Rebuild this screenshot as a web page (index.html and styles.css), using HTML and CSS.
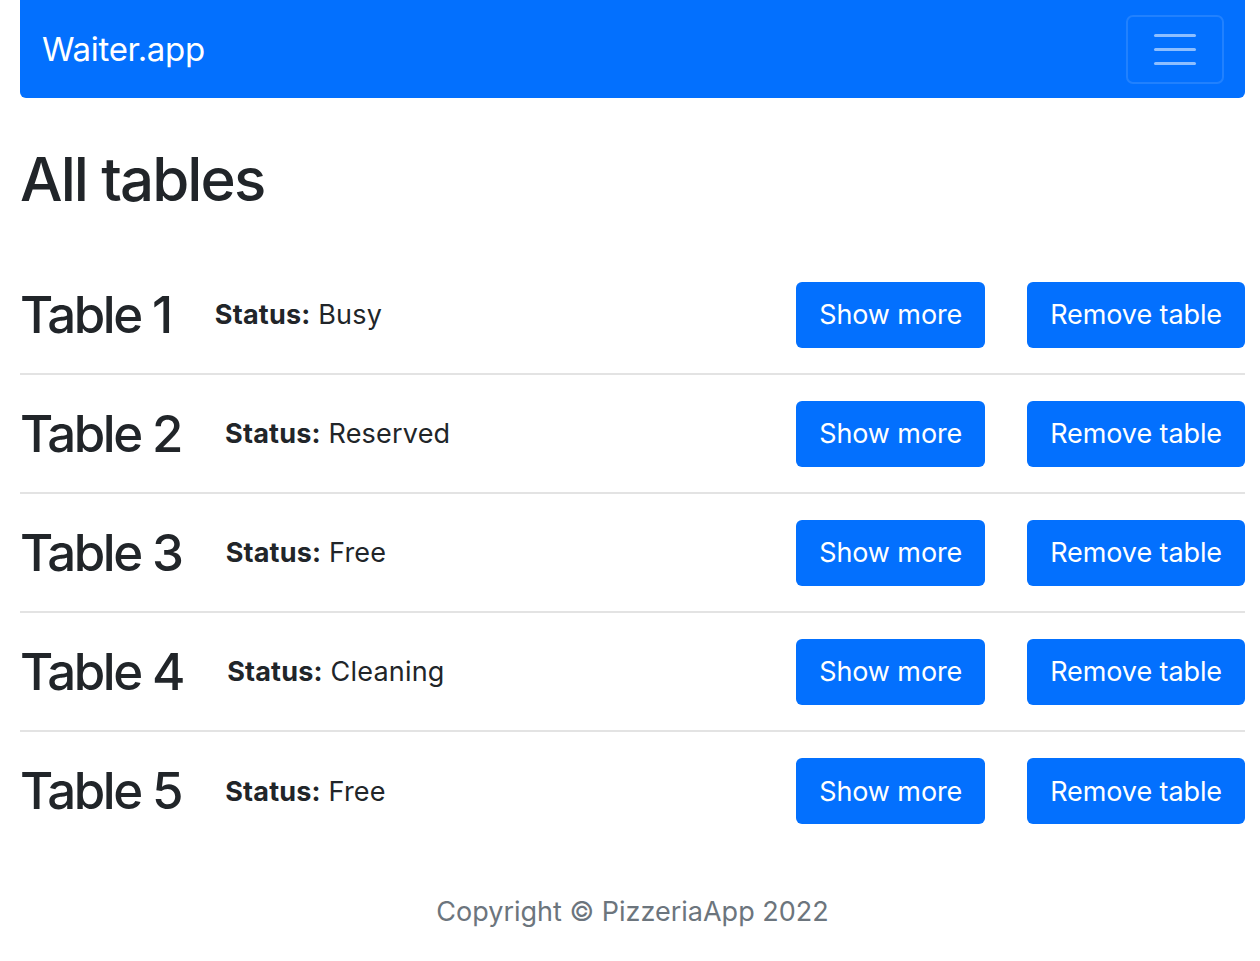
FILE: index.html
```html
<!DOCTYPE html>
<html lang="en">
<head>
<meta charset="utf-8">
<title>Waiter.app</title>
<link rel="stylesheet" href="styles.css">
</head>
<body>
<nav class="navbar">
  <a class="brand" href="#">Waiter.app</a>
  <button class="toggler" aria-label="Toggle navigation">
    <span class="bar"></span><span class="bar"></span><span class="bar"></span>
  </button>
</nav>
<main>
  <h1 class="title">All tables</h1>
  <ul class="tables">
    <li class="row">
      <div class="info"><h2 class="name">Table 1</h2><p class="status"><b>Status:</b> Busy</p></div>
      <div class="actions"><button class="btn">Show more</button><button class="btn">Remove table</button></div>
    </li>
    <li class="row">
      <div class="info"><h2 class="name">Table 2</h2><p class="status"><b>Status:</b> Reserved</p></div>
      <div class="actions"><button class="btn">Show more</button><button class="btn">Remove table</button></div>
    </li>
    <li class="row">
      <div class="info"><h2 class="name">Table 3</h2><p class="status"><b>Status:</b> Free</p></div>
      <div class="actions"><button class="btn">Show more</button><button class="btn">Remove table</button></div>
    </li>
    <li class="row">
      <div class="info"><h2 class="name">Table 4</h2><p class="status"><b>Status:</b> Cleaning</p></div>
      <div class="actions"><button class="btn">Show more</button><button class="btn">Remove table</button></div>
    </li>
    <li class="row">
      <div class="info"><h2 class="name">Table 5</h2><p class="status"><b>Status:</b> Free</p></div>
      <div class="actions"><button class="btn">Show more</button><button class="btn">Remove table</button></div>
    </li>
  </ul>
</main>
<footer class="footer">Copyright © PizzeriaApp 2022</footer>
</body>
</html>
```
FILE: styles.css
```css
* { box-sizing: border-box; }
body {
  margin: 0;
  padding: 0 15px 0 20px;
  font-family: Inter, "Liberation Sans", sans-serif;
  color: #212529;
  background: #fff;
}
.navbar {
  height: 98px;
  background: #0370fe;
  border-radius: 0 0 6px 6px;
  display: flex;
  align-items: center;
  justify-content: space-between;
  padding: 0 21px 0 22px;
}
.brand {
  color: #fff;
  text-decoration: none;
  font-size: 33px;
  font-weight: 400;
  letter-spacing: -0.3px;
}
.toggler {
  width: 98px;
  height: 69px;
  background: transparent;
  border: 2px solid rgba(255,255,255,0.12);
  border-radius: 7px;
  display: flex;
  flex-direction: column;
  align-items: center;
  justify-content: center;
  gap: 11px;
  padding: 0;
}
.bar {
  display: block;
  width: 42px;
  height: 3px;
  border-radius: 2px;
  background: rgba(255,255,255,0.55);
}
.title {
  margin: 45px 0 41px;
  font-size: 60px;
  font-weight: 500;
  line-height: 1.2;
  letter-spacing: -1.9px;
}
.tables {
  list-style: none;
  margin: 0;
  padding: 0;
}
.row {
  height: 119px;
  display: flex;
  align-items: center;
  justify-content: space-between;
  border-bottom: 2px solid #e3e3e3;
}
.row:last-child { border-bottom: none; height: 118px; }
.info {
  display: flex;
  align-items: center;
  gap: 44px;
}
.name {
  margin: 0;
  font-size: 51px;
  font-weight: 500;
  line-height: 1.2;
  letter-spacing: -2.4px;
}
.status {
  margin: 0;
  font-size: 27px;
  letter-spacing: 0.2px;
}
.status b { font-weight: 700; }
.actions {
  display: flex;
  gap: 42px;
}
.btn {
  height: 66px;
  padding: 0 23px;
  background: #0370fe;
  color: #fff;
  border: none;
  border-radius: 6px;
  font-family: inherit;
  font-size: 27px;
  letter-spacing: -0.1px;
}
.footer {
  text-align: center;
  color: #6c757d;
  font-size: 27px;
  padding: 45px 0 0;
}
```
